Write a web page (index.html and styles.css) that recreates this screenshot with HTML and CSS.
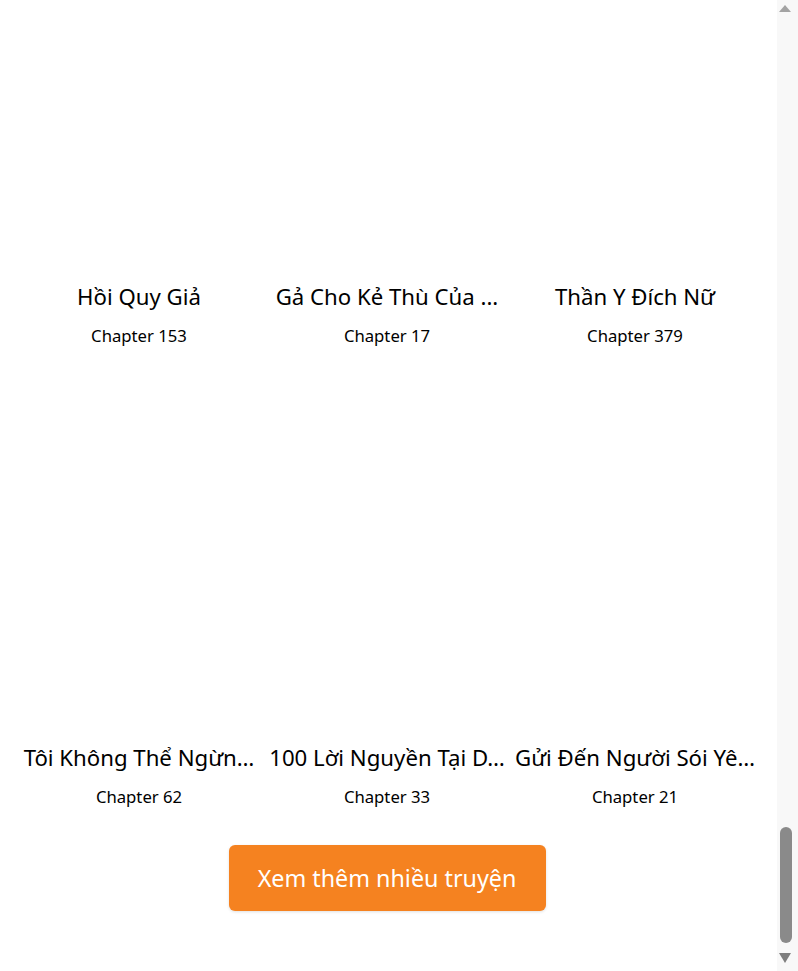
FILE: index.html
```html
<!DOCTYPE html>
<html lang="vi">
<head>
    <meta charset="UTF-8">
    <meta name="viewport" content="width=device-width, initial-scale=1.0">
    <title>Truyện mới cập nhật</title>
    <link rel="stylesheet" href="styles.css">
</head>
<body>
    <div class="page">
        <div class="story-list">
            <div class="story-grid">
                <div class="story-card">
                    <div class="story-cover"></div>
                    <h3 class="story-title">Hồi Quy Giả</h3>
                    <p class="story-chapter">Chapter 153</p>
                </div>
                <div class="story-card">
                    <div class="story-cover"></div>
                    <h3 class="story-title">Gả Cho Kẻ Thù Của ...</h3>
                    <p class="story-chapter">Chapter 17</p>
                </div>
                <div class="story-card">
                    <div class="story-cover"></div>
                    <h3 class="story-title">Thần Y Đích Nữ</h3>
                    <p class="story-chapter">Chapter 379</p>
                </div>
                <div class="story-card">
                    <div class="story-cover"></div>
                    <h3 class="story-title">Tôi Không Thể Ngừn…</h3>
                    <p class="story-chapter">Chapter 62</p>
                </div>
                <div class="story-card">
                    <div class="story-cover"></div>
                    <h3 class="story-title">100 Lời Nguyền Tại D…</h3>
                    <p class="story-chapter">Chapter 33</p>
                </div>
                <div class="story-card">
                    <div class="story-cover"></div>
                    <h3 class="story-title">Gửi Đến Người Sói Yê…</h3>
                    <p class="story-chapter">Chapter 21</p>
                </div>
            </div>

            <div class="more-container">
                <button class="more-button">Xem thêm nhiều truyện</button>
            </div>
        </div>

        <!-- scrollbar, scrolled to the very end -->
        <div class="scrollbar">
            <div class="scroll-arrow scroll-up"></div>
            <div class="scroll-track">
                <div class="scroll-thumb"></div>
            </div>
            <div class="scroll-arrow scroll-down"></div>
        </div>
    </div>
</body>
</html>
```

FILE: styles.css
```css
body { margin: 0; font-family: "Noto Sans", "Open Sans", sans-serif; background-color: #FFFFFF; color: #000000; }
.page { display: flex; height: 971px; overflow: hidden; }
.story-list { flex: 1; padding-left: 23px; overflow: hidden; }
.story-grid { display: grid; grid-template-columns: repeat(3, 232px); column-gap: 16px; row-gap: 19px; margin-top: -94px; }
.story-card { display: flex; flex-direction: column; align-items: center; min-width: 0; }
.story-cover { align-self: stretch; height: 360px; margin-bottom: 16px; background: #FFFFFF; }
.story-title {
    margin: 0;
    font-size: 22.2px;
    font-weight: 400;
    line-height: 30px;
    white-space: nowrap;
}
.story-chapter { margin: 12px 0 0 0; font-size: 16.7px; line-height: 24px; }
.more-container { display: flex; justify-content: center; width: 728px; margin-top: 36px; }
.more-button {
    width: 317px;
    height: 66px;
    border: none;
    border-radius: 6px;
    background-color: #F58220;
    color: #FFFFFF;
    font-family: "Noto Sans", "Open Sans", sans-serif;
    font-size: 23.3px;
    cursor: pointer;
    box-shadow: 0 1px 3px rgba(0, 0, 0, 0.12);
}

.scrollbar { width: 21px; display: flex; flex-direction: column; background: #F8F8F8; }
.scroll-arrow { width: 0; height: 0; margin-left: 2px; border-left: 6.5px solid transparent; border-right: 6.5px solid transparent; }
.scroll-up { margin-top: 5px; border-bottom: 7px solid #A3A3A3; }
.scroll-down { margin-top: 10px; margin-bottom: 8px; border-top: 10px solid #7E7E7E; }
.scroll-track { flex: 1; display: flex; flex-direction: column; justify-content: flex-end; }
.scroll-thumb { width: 12px; height: 116px; margin-left: 3px; border-radius: 6px; background: #8A8A8A; }
```
